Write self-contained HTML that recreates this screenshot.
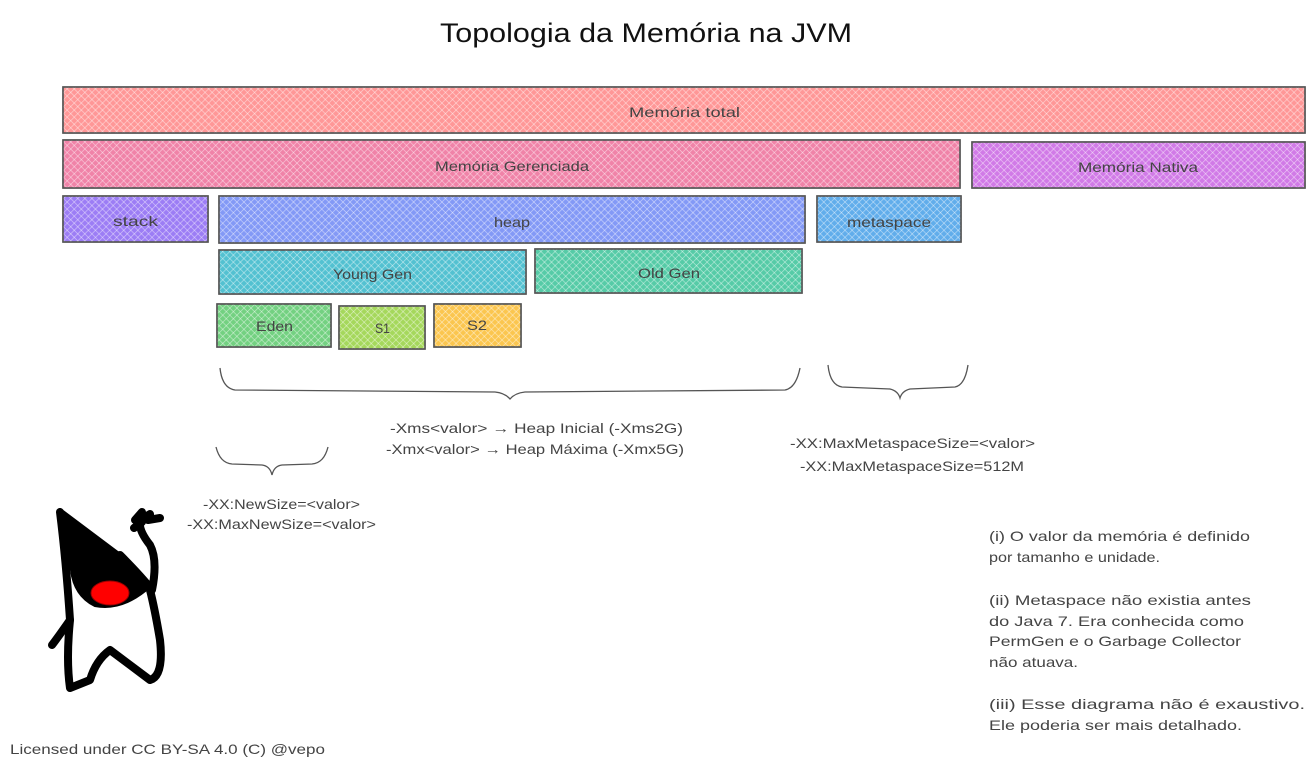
<!DOCTYPE html>
<html><head><meta charset="utf-8"><style>
html,body{margin:0;padding:0;background:#fff}
svg{display:block}
text{font-family:"Liberation Sans",sans-serif;fill:#444}
</style></head><body>
<svg width="1314" height="768" viewBox="0 0 1314 768" xmlns="http://www.w3.org/2000/svg">
<defs>
<pattern id="h" width="5" height="5" patternUnits="userSpaceOnUse" patternTransform="rotate(45)">
<rect width="5" height="5" fill="#fff" opacity="0.22"/>
<line x1="0" y1="0" x2="0" y2="5" stroke="#fff" stroke-width="1.3" opacity="0.55"/>
<line x1="0" y1="0" x2="5" y2="0" stroke="#fff" stroke-width="1.3" opacity="0.55"/>
</pattern>
</defs>
<g stroke="#555" stroke-width="1.5">
<rect x="63" y="87" width="1242" height="46" fill="#ff7a7a"/>
<rect x="63" y="87" width="1242" height="46" fill="url(#h)"/>
<rect x="63" y="140" width="897" height="48" fill="#ec6090"/>
<rect x="63" y="140" width="897" height="48" fill="url(#h)"/>
<rect x="972" y="142" width="333" height="46" fill="#c455e0"/>
<rect x="972" y="142" width="333" height="46" fill="url(#h)"/>
<rect x="63" y="196" width="145" height="46" fill="#8058f2"/>
<rect x="63" y="196" width="145" height="46" fill="url(#h)"/>
<rect x="219" y="196" width="586" height="47" fill="#607cf4"/>
<rect x="219" y="196" width="586" height="47" fill="url(#h)"/>
<rect x="817" y="196" width="144" height="46" fill="#3496e6"/>
<rect x="817" y="196" width="144" height="46" fill="url(#h)"/>
<rect x="219" y="250" width="307" height="44" fill="#22b0c4"/>
<rect x="219" y="250" width="307" height="44" fill="url(#h)"/>
<rect x="535" y="249" width="267" height="44" fill="#26bd8e"/>
<rect x="535" y="249" width="267" height="44" fill="url(#h)"/>
<rect x="217" y="304" width="114" height="43" fill="#4cc45e"/>
<rect x="217" y="304" width="114" height="43" fill="url(#h)"/>
<rect x="339" y="306" width="86" height="43" fill="#8ccd2e"/>
<rect x="339" y="306" width="86" height="43" fill="url(#h)"/>
<rect x="434" y="304" width="87" height="43" fill="#fab61e"/>
<rect x="434" y="304" width="87" height="43" fill="url(#h)"/>
</g>
<g font-size="14" lengthAdjust="spacingAndGlyphs">
<text x="629" y="117" textLength="111" lengthAdjust="spacingAndGlyphs">Memória total</text>
<text x="435" y="171" textLength="154" lengthAdjust="spacingAndGlyphs">Memória Gerenciada</text>
<text x="1078" y="172" textLength="120" lengthAdjust="spacingAndGlyphs">Memória Nativa</text>
<text x="113" y="226" textLength="45" lengthAdjust="spacingAndGlyphs">stack</text>
<text x="494" y="227" textLength="36" lengthAdjust="spacingAndGlyphs">heap</text>
<text x="847" y="227" textLength="84" lengthAdjust="spacingAndGlyphs">metaspace</text>
<text x="333" y="279" textLength="79" lengthAdjust="spacingAndGlyphs">Young Gen</text>
<text x="638" y="278" textLength="62" lengthAdjust="spacingAndGlyphs">Old Gen</text>
<text x="256" y="331" textLength="37" lengthAdjust="spacingAndGlyphs">Eden</text>
<text x="375" y="333" textLength="15" lengthAdjust="spacingAndGlyphs">S1</text>
<text x="467" y="330" textLength="20" lengthAdjust="spacingAndGlyphs">S2</text>
</g>
<text x="440" y="42" font-size="27" textLength="412" lengthAdjust="spacingAndGlyphs" style="fill:#111">Topologia da Memória na JVM</text>
<g fill="none" stroke="#555" stroke-width="1.3">
<path d="M220 368 Q222 388 235 390 L495 392 Q505 393 510 399 Q515 393 525 392 L785 390 Q796 388 800 368"/>
<path d="M828 365 Q830 385 842 387 L890 389 Q898 391 900 398 Q902 391 910 389 L955 387 Q965 385 968 365"/>
<path d="M216 447 Q220 463 232 464 L262 465 Q270 466 272 475 Q274 466 282 465 L312 464 Q324 463 328 447"/>
</g>
<g font-size="14">
<text x="390" y="433" textLength="293" lengthAdjust="spacingAndGlyphs">-Xms&lt;valor&gt; → Heap Inicial (-Xms2G)</text>
<text x="386" y="454" textLength="298" lengthAdjust="spacingAndGlyphs">-Xmx&lt;valor&gt; → Heap Máxima (-Xmx5G)</text>
<text x="790" y="448" textLength="245" lengthAdjust="spacingAndGlyphs">-XX:MaxMetaspaceSize=&lt;valor&gt;</text>
<text x="800" y="471" textLength="224" lengthAdjust="spacingAndGlyphs">-XX:MaxMetaspaceSize=512M</text>
<text x="203" y="509" textLength="157" lengthAdjust="spacingAndGlyphs">-XX:NewSize=&lt;valor&gt;</text>
<text x="187" y="529" textLength="189" lengthAdjust="spacingAndGlyphs">-XX:MaxNewSize=&lt;valor&gt;</text>
<text x="989" y="541" textLength="261" lengthAdjust="spacingAndGlyphs">(i) O valor da memória é definido</text>
<text x="989" y="562" textLength="171" lengthAdjust="spacingAndGlyphs">por tamanho e unidade.</text>
<text x="989" y="605" textLength="262" lengthAdjust="spacingAndGlyphs">(ii) Metaspace não existia antes</text>
<text x="989" y="626" textLength="255" lengthAdjust="spacingAndGlyphs">do Java 7. Era conhecida como</text>
<text x="989" y="646" textLength="252" lengthAdjust="spacingAndGlyphs">PermGen e o Garbage Collector</text>
<text x="989" y="667" textLength="89" lengthAdjust="spacingAndGlyphs">não atuava.</text>
<text x="989" y="709" textLength="316" lengthAdjust="spacingAndGlyphs">(iii) Esse diagrama não é exaustivo.</text>
<text x="989" y="730" textLength="253" lengthAdjust="spacingAndGlyphs">Ele poderia ser mais detalhado.</text>
<text x="10" y="754" textLength="315" lengthAdjust="spacingAndGlyphs">Licensed under CC BY-SA 4.0 (C) @vepo</text>
</g>
<g stroke="#000" stroke-linecap="round" stroke-linejoin="round" fill="none">
<path d="M120 555 Q140 575 152 590 Q158 560 150 545 Q138 530 140 520" stroke-width="8"/>
<path d="M140 520 L150 514 M135 520 L142 512 M148 520 L160 518 M142 522 L134 528" stroke-width="8"/>
<path d="M60 512 Q66 560 70 620 Q56 640 52 645" stroke-width="8"/>
<path d="M70 620 Q66 660 70 688 L90 680 Q96 660 110 650 L150 680 Q164 676 160 640 Q155 610 150 590" stroke-width="8"/>
<path d="M60 510 L120 555 Q135 575 145 590 Q120 610 95 605 Q75 595 72 570 Q66 540 60 510Z" fill="#000" stroke-width="4"/>
</g>
<ellipse cx="110" cy="593" rx="19" ry="12" fill="#f00" stroke="#900" stroke-width="1"/>
</svg>
</body></html>
